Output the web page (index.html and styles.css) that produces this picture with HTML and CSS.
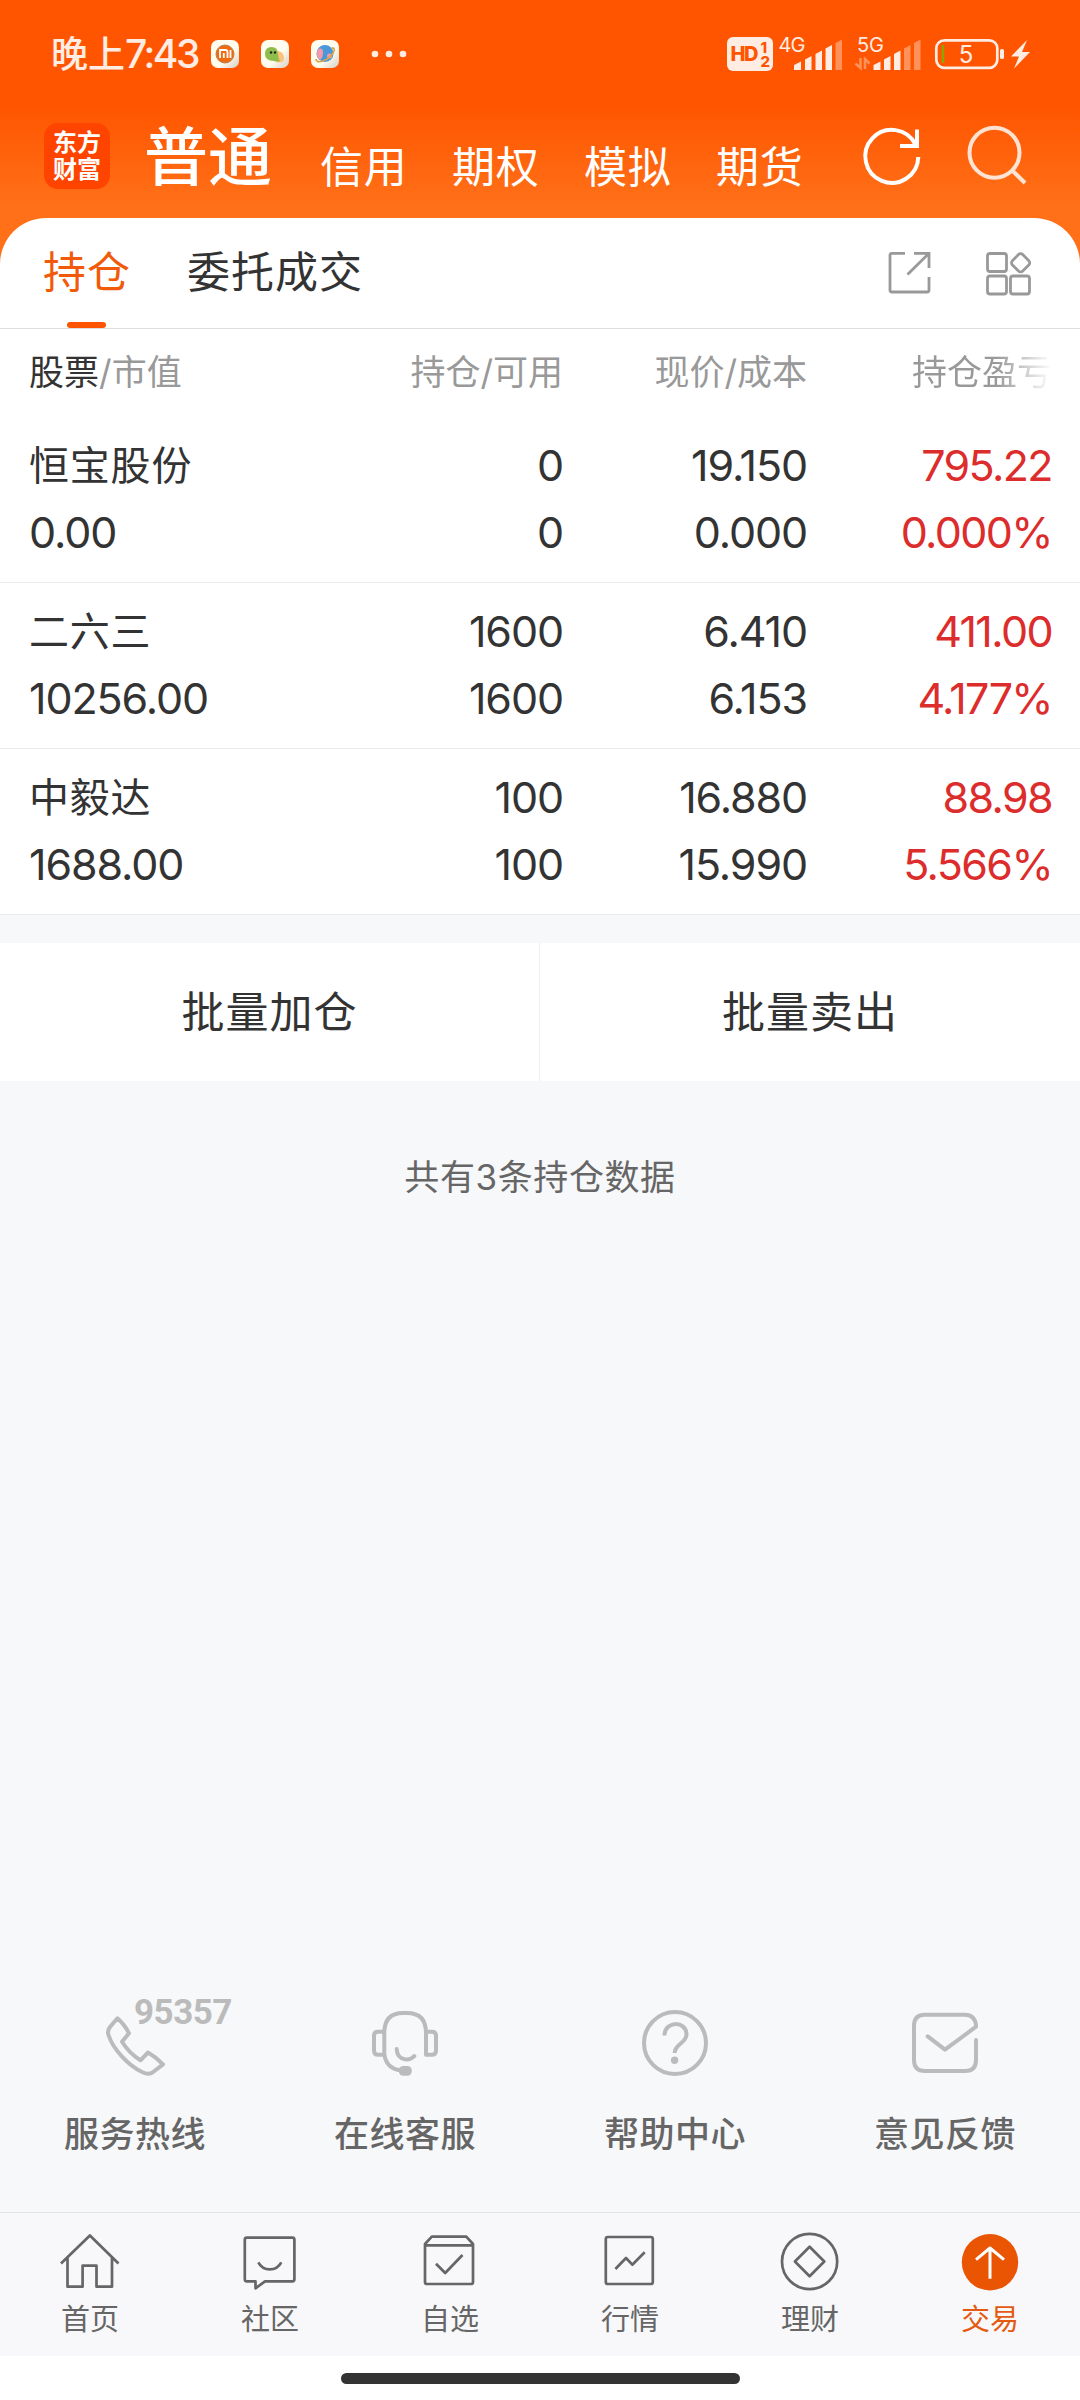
FILE: index.html
```html
<!DOCTYPE html>
<html lang="zh-CN">
<head>
<meta charset="utf-8">
<title>持仓</title>
<link rel="stylesheet" href="styles.css">
</head>
<body>
<div class="app">
  <header class="top">
    <div class="status">
      <div class="time">晚上<span class="clock">7:43</span></div>
      <svg class="notices" width="200" height="40" viewBox="0 0 200 40">
        <defs>
          <linearGradient id="tile" x1="0" y1="0" x2="1" y2="1">
            <stop offset="0.6" stop-color="#fffcf0"/><stop offset="1" stop-color="#d5cfc4"/>
          </linearGradient>
        </defs>
        <g fill="url(#tile)">
          <rect x="1" y="6" width="28" height="28" rx="7"/>
          <rect x="51" y="6" width="28" height="28" rx="7"/>
          <rect x="101" y="6" width="28" height="28" rx="7"/>
        </g>
        <circle cx="15" cy="20" r="9" fill="#f06a10"/>
        <circle cx="15" cy="20" r="9" fill="none" stroke="#b9824a" stroke-width="1"/>
        <path d="M10 24v-8h5.500q2 0 2 2v6M13.800 19v5M20.500 16v8" fill="none" stroke="#fff" stroke-width="1.800"/>
        <path d="M66 28q8 2 8-4 0-6-6-7z" fill="#fdc27a"/>
        <path d="M55 20q0-7 6.500-7t6.500 7q0 4 2 7-3 1-6 0-9 0-9-7z" fill="#8ebd4c"/>
        <circle cx="61" cy="18.500" r="1.200" fill="#222"/><circle cx="65" cy="18.500" r="1.200" fill="#222"/>
        <circle cx="115" cy="19.500" r="8.500" fill="#4a97d9"/>
        <path d="M108 15q5-2 5 3 0 6-3 8-5-4-2-11z" fill="#f49aab"/>
        <circle cx="119.500" cy="22" r="2.500" fill="#f49aab"/>
        <path d="M106 25q0 4 7 2 8-3 11-10 1-3-2-3" fill="none" stroke="#d9a648" stroke-width="1.800"/>
        <g fill="#ffece2"><circle cx="165" cy="20" r="3.300"/><circle cx="179" cy="20" r="3.300"/><circle cx="193" cy="20" r="3.300"/></g>
      </svg>
      <svg class="signals" width="312" height="40" viewBox="724 34 312 40">
        <rect x="727" y="37" width="46" height="34" rx="6" fill="#ffece2"/>
        <g class="hd"><text x="730.500" y="61" font-size="20" textLength="28">HD</text>
        <text x="760.500" y="52.500" font-size="15">1</text><text x="760.500" y="67" font-size="15">2</text></g>
        <g class="net"><text x="778.500" y="52" textLength="27">4G</text><text x="857" y="52" textLength="27">5G</text></g>
        <g fill="#ffece2">
          <path d="M794 70v-5l7-3.500v8.500zM805 70v-10.500l6.500-3.500v14zM815.500 70v-16l6.500-3.500v19.500zM825.500 70v-21.500l6.500-3.500v25z"/>
          <path d="M873.500 70v-5l7-3.500v8.500zM884 70v-10.500l6.500-3.500v14zM894 70v-16l6.500-3.500v19.500z"/>
          <path opacity=".4" d="M835.500 70v-27l6.500-3.500v30.500zM904 70v-21.500l6.500-3.500v25zM914 70v-27l6.500-3.500v30.500z"/>
        </g>
        <path d="M860.500 58v10l-5-4.500M865 69v-10l4.500 4.500" fill="none" stroke="#ffece2" stroke-width="2.500" opacity=".4"/>
        <rect x="936.300" y="40.300" width="61" height="27.500" rx="8" fill="none" stroke="#ffece2" stroke-width="2.700"/>
        <rect x="1000" y="49" width="4" height="10" rx="1.500" fill="#ffece2"/>
        <path d="M943 45v18" stroke="#86a800" stroke-width="2.400"/>
        <text class="pct" x="966" y="63" text-anchor="middle">5</text>
        <path d="M1027 40l-16 16.500h8l-5 12 16-16.500h-8z" fill="#ffece2"/>
      </svg>
    </div>
    <nav class="modes">
      <div class="logo"><span>东方</span><span>财富</span></div>
      <a class="mode current">普通</a>
      <a class="mode">信用</a>
      <a class="mode">期权</a>
      <a class="mode">模拟</a>
      <a class="mode">期货</a>
      <svg class="tools" width="180" height="72" viewBox="860 120 180 72" fill="none" stroke="#fff" stroke-width="4">
        <path d="M918.300 157A26.500 26.500 0 1 1 915.500 144.500"/>
        <path d="M917 129.500V146H900"/>
        <g opacity=".82"><circle cx="994.500" cy="152.700" r="25"/><path d="M1012.500 170.700L1025 183"/></g>
      </svg>
    </nav>
  </header>

  <main class="sheet">
    <div class="tabs">
      <a class="tab active">持仓</a>
      <a class="tab">委托成交</a>
      <svg class="tab-tools" width="160" height="60" viewBox="880 242 160 60" fill="none" stroke="#999" stroke-width="2.800">
        <path d="M905 253.300H892Q890 253.300 890 255.300V290Q890 292 892 292H927Q929 292 929 290V277M914 253.300H929V268M929 253.300L907.500 274.500"/>
        <rect x="987.500" y="253.500" width="19" height="18" rx="2.500"/>
        <rect x="987.500" y="276" width="19" height="18" rx="2.500"/>
        <rect x="1010.500" y="276" width="19" height="18" rx="2.500"/>
        <rect x="1013.300" y="255.500" width="14.600" height="14.600" rx="3" transform="rotate(45 1020.600 262.800)"/>
      </svg>
    </div>

    <div class="cols heading">
      <div><b>股票</b>/市值</div>
      <div>持仓/可用</div>
      <div>现价/成本</div>
      <div class="faded">持仓盈亏</div>
    </div>

    <div class="cols row">
      <div class="name">恒宝股份</div><div>0</div><div>19.150</div><div class="gain">795.22</div>
      <div>0.00</div><div>0</div><div>0.000</div><div class="gain">0.000%</div>
    </div>
    <div class="cols row">
      <div class="name">二六三</div><div>1600</div><div>6.410</div><div class="gain">411.00</div>
      <div>10256.00</div><div>1600</div><div>6.153</div><div class="gain">4.177%</div>
    </div>
    <div class="cols row">
      <div class="name">中毅达</div><div>100</div><div>16.880</div><div class="gain">88.98</div>
      <div>1688.00</div><div>100</div><div>15.990</div><div class="gain">5.566%</div>
    </div>
  </main>

  <div class="batch">
    <button>批量加仓</button>
    <button>批量卖出</button>
  </div>
  <p class="count">共有3条持仓数据</p>

  <section class="services">
    <a class="service">
      <span class="hotline">95357</span>
      <svg width="72" height="72" viewBox="0 0 72 72"><path d="M18.400 11.300L11 20Q8 24 9.500 28C14 42 29 58.500 44 65.500Q49 68 53.500 65.500L64 57.300Q57 50 49 45.500L41.500 53.300Q30 46 23 34.700L30 26.300Q26 18 18.400 11.300Z"/></svg>
      服务热线
    </a>
    <a class="service">
      <svg width="72" height="72" viewBox="0 0 72 72"><path d="M15.300 47.700H9Q5 47.700 5 43.700V28.700Q5 24.700 9 24.700H15.300M15.300 48V26Q15.300 6 34 6H38Q57 6 57 26V47.700H63Q67 47.700 67 43.700V28.700Q67 24.700 63 24.700H57M15.300 47Q17 61 31 63.300M27.700 42Q28 51 36 52.300 42 53 45.300 49"/><rect x="29.800" y="59" width="13" height="9.700" rx="4.500" fill="#bbb" stroke="none"/></svg>
      在线客服
    </a>
    <a class="service">
      <svg width="72" height="72" viewBox="0 0 72 72"><circle cx="36" cy="36" r="31"/><path d="M25.500 28.500C25.500 13.500 47.500 13.500 47.500 27.500 47.500 36 35.600 37 35.600 46" stroke-linecap="butt"/><circle cx="35.600" cy="53.300" r="3.700" fill="#bbb" stroke="none"/></svg>
      帮助中心
    </a>
    <a class="service">
      <svg width="72" height="72" viewBox="0 0 72 72"><path d="M18.700 29.300L36 42.700 67 19.700V18Q65.500 7.700 56 7.700H16Q5 7.700 5 18.700V53Q5 64 16 64H56Q67 64 67 53V33"/></svg>
      意见反馈
    </a>
  </section>

  <nav class="bottom">
    <a><svg width="64" height="64" viewBox="0 0 64 64"><path d="M3 33.500L31.900 5.500 60.500 33.500M9.500 28V56.700H24.600V35.700H38.500V56.700H54V28"/></svg>首页</a>
    <a><svg width="64" height="64" viewBox="0 0 64 64"><path d="M8.800 7.700H54.400Q56.400 7.700 56.400 9.700V49.300Q56.400 51.300 54.400 51.300H27L17.500 58.300V51.300H8.800Q6.800 51.300 6.800 49.300V9.700Q6.800 7.700 8.800 7.700ZM20.300 32.300Q24 39.300 31.800 39.300T43.300 32.300"/></svg>社区</a>
    <a><svg width="64" height="64" viewBox="0 0 64 64"><path d="M7 15.300H55V52Q55 54 53 54H9Q7 54 7 52V14L13.800 6.700H48.300L55 14V16M18 33.700L27.200 43 44.500 25"/></svg>自选</a>
    <a><svg width="64" height="64" viewBox="0 0 64 64"><rect x="7.800" y="7" width="47" height="47" rx="2"/><path d="M17.400 39L28 28 34.300 34.700 46.700 22.300"/></svg>行情</a>
    <a><svg width="64" height="64" viewBox="0 0 64 64"><circle cx="31.600" cy="31.500" r="27.600"/><path d="M31.600 16.800L46.300 31.500 31.600 46.200 16.900 31.500Z"/></svg>理财</a>
    <a class="on"><svg width="64" height="64" viewBox="0 0 64 64"><circle cx="32" cy="32.300" r="28.200" fill="#ea5504" stroke="none"/><path d="M32 48.700V18M18 29.700L32 18 46 29.700" stroke="#fff" stroke-width="3"/></svg>交易</a>
  </nav>
  <div class="gesture"><i></i></div>
</div>
</body>
</html>
```
FILE: styles.css
```css
* { box-sizing: border-box; }
body {
  margin: 0;
  background: #f7f8fa;
  color: #333;
  font-family: Inter, "Noto Sans CJK SC", sans-serif;
}
.app {
  width: 1080px;
  height: 2400px;
  display: flex;
  flex-direction: column;
  background: linear-gradient(#f50 0, #f50 105px, #ff7018 205px, #ff7018 300px, #f7f8fa 300px);
  overflow: hidden;
}
svg { display: block; flex: none; }

.top { height: 218px; flex: none; }
.status {
  height: 108px;
  display: flex;
  align-items: center;
  padding: 0 44px 0 51px;
}
.time {
  width: 159px;
  font-size: 37px;
  line-height: 40px;
  white-space: nowrap;
  color: #ffece2;
  font-weight: 500;
}
.clock { font-size: 39px; letter-spacing: -2.500px; font-weight: 450; }
.signals { margin-left: auto; }
.hd { font: 800 20px Inter, sans-serif; fill: #f50; }
.net { font: 400 20px Inter, sans-serif; fill: #ffece2; }
.pct { font: 400 24px Inter, sans-serif; fill: #ffece2; }

.modes {
  height: 110px;
  display: flex;
  align-items: flex-start;
  padding: 12px 40px 0 44px;
}
.logo {
  width: 66px;
  height: 66px;
  margin: 3px 34px 0 0;
  border-radius: 14px;
  background: #ff4400;
  color: #fff;
  font-size: 24px;
  font-weight: 700;
  line-height: 27px;
  display: flex;
  flex-direction: column;
  align-items: center;
  justify-content: center;
}
.mode {
  width: 132px;
  padding-top: 17px;
  font-size: 43px;
  line-height: 60px;
  letter-spacing: 0.800px;
  color: #fff;
  white-space: nowrap;
}
.mode.current {
  width: 176px;
  padding-top: 7px;
  font-size: 64px;
  letter-spacing: 0;
  font-weight: 500;
}
.tools { margin-left: 12px; }

.sheet {
  flex: none;
  background: #fff;
  border-radius: 46px 46px 0 0;
}
.tabs {
  height: 111px;
  display: flex;
  padding: 0 40px 0 43px;
  border-bottom: 1px solid #ddd;
}
.tab {
  display: flex;
  flex-direction: column;
  font-size: 43px;
  line-height: 108px;
  letter-spacing: 1px;
  margin-right: 56px;
}
.tab.active { color: #f15a0a; }
.tab.active::after {
  content: "";
  width: 39px;
  height: 6px;
  margin: -4px 0 0 24px;
  border-radius: 3px;
  background: #f50;
}
.tab-tools { margin: 24px 0 0 auto; }

.cols {
  display: grid;
  grid-template-columns: 271px 263px 244px 245px;
  align-content: start;
  padding: 0 28px 0 29px;
}
.cols > div { text-align: right; white-space: nowrap; }
.cols > div:nth-child(4n + 1) { text-align: left; }
.heading {
  height: 88px;
  font-size: 35px;
  line-height: 87px;
  color: #999;
}
.heading b { font-weight: 400; color: #333; }
.heading .faded {
  background: linear-gradient(90deg, #999 0 190px, #fff 245px);
  -webkit-background-clip: text;
  background-clip: text;
  color: transparent;
}
.row {
  height: 166px;
  padding-top: 15px;
  border-bottom: 1px solid #eaebec;
  font-size: 43px;
  line-height: 67px;
  letter-spacing: -1.100px;
}
.row .name { font-size: 40px; letter-spacing: 0.800px; }
.row .gain { color: #dc2c2c; letter-spacing: -1.600px; }

.batch {
  flex: none;
  height: 138px;
  margin-top: 28px;
  display: flex;
  background: #fff;
}
.batch button {
  width: 539px;
  border: 0;
  background: none;
  color: #333;
  font: 400 43px/136px Inter, "Noto Sans CJK SC", sans-serif;
  letter-spacing: 1px;
  padding: 0;
}
.batch button + button { width: 541px; border-left: 1px solid #eee; }
.count {
  margin: 66px 0 0;
  text-align: center;
  font-size: 35px;
  line-height: 60px;
  letter-spacing: 0.600px;
  color: #666;
}

.services {
  margin-top: auto;
  height: 205px;
  flex: none;
  display: flex;
}
.service {
  flex: 1;
  position: relative;
  display: flex;
  flex-direction: column;
  align-items: center;
  font-size: 35px;
  font-weight: 500;
  line-height: 50px;
  letter-spacing: 0.500px;
  color: #666;
}
.service svg {
  margin-bottom: 30px;
  fill: none;
  stroke: #bbb;
  stroke-width: 4;
  stroke-linecap: round;
  stroke-linejoin: round;
}
.hotline {
  position: absolute;
  left: 134px;
  top: -14px;
  font: 700 35px/40px Roboto, sans-serif;
  letter-spacing: -0.500px;
  color: #bbb;
}

.bottom {
  height: 144px;
  flex: none;
  display: flex;
  border-top: 1px solid #e3e4e6;
  background: #f8f8fa;
}
.bottom a {
  flex: 1;
  padding-top: 17px;
  display: flex;
  flex-direction: column;
  align-items: center;
  font-size: 29px;
  line-height: 52px;
  color: #666;
}
.bottom svg {
  fill: none;
  stroke: #666;
  stroke-width: 2.700;
  stroke-linejoin: round;
}
.bottom .on { color: #e35a10; }
.gesture {
  height: 44px;
  flex: none;
  padding-top: 17px;
  background: #fff;
}
.gesture i {
  display: block;
  width: 399px;
  height: 11px;
  margin: 0 auto;
  border-radius: 6px;
  background: #333;
}
```
